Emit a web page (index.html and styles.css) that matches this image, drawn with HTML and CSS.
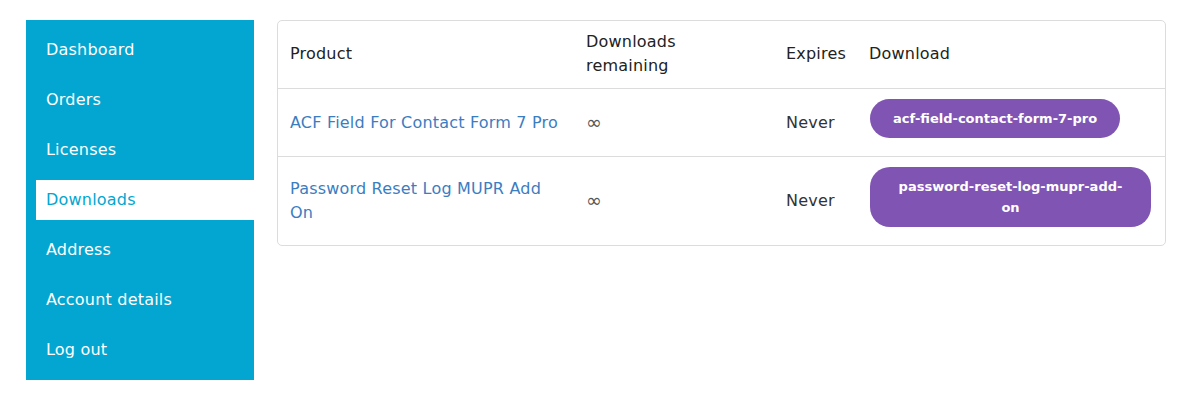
FILE: index.html
```html
<!DOCTYPE html>
<html lang="en">
<head>
<meta charset="utf-8">
<title>Downloads</title>
<link rel="stylesheet" href="styles.css">
</head>
<body>
<div class="account">
  <nav class="nav">
    <a class="nav-item" href="#">Dashboard</a>
    <a class="nav-item" href="#">Orders</a>
    <a class="nav-item" href="#">Licenses</a>
    <a class="nav-item active" href="#">Downloads</a>
    <a class="nav-item" href="#">Address</a>
    <a class="nav-item" href="#">Account details</a>
    <a class="nav-item" href="#">Log out</a>
  </nav>
  <div class="content">
    <table class="downloads">
      <thead>
        <tr>
          <th class="c-product">Product</th>
          <th class="c-remaining">Downloads remaining</th>
          <th class="c-expires">Expires</th>
          <th class="c-file">Download</th>
        </tr>
      </thead>
      <tbody>
        <tr>
          <td><a class="link" href="#">ACF Field For Contact Form 7 Pro</a></td>
          <td><span class="inf">∞</span></td>
          <td>Never</td>
          <td class="file"><a class="btn" href="#">acf-field-contact-form-7-pro</a></td>
        </tr>
        <tr>
          <td><a class="link" href="#">Password Reset Log MUPR Add On</a></td>
          <td><span class="inf">∞</span></td>
          <td>Never</td>
          <td class="file"><a class="btn" href="#">password-reset-log-mupr-add-on</a></td>
        </tr>
      </tbody>
    </table>
  </div>
</div>
</body>
</html>
```

FILE: styles.css
```css
html, body {
  margin: 0;
  padding: 0;
  background: #fff;
}
body {
  font-family: "DejaVu Sans", "Noto Sans", sans-serif;
  font-size: 16px;
  letter-spacing: 0.2px;
  color: #333;
}
.account {
  width: 1140px;
  padding: 20px 0 0 26px;
  display: flex;
  justify-content: space-between;
  align-items: flex-start;
}
.nav {
  width: 228px;
  box-sizing: border-box;
  background: #03a6d0;
  padding: 10px 0 10px 10px;
  display: flex;
  flex-direction: column;
  gap: 10px;
}
.nav-item {
  display: block;
  height: 40px;
  line-height: 40px;
  padding-left: 10px;
  color: #fff;
  text-decoration: none;
  font-size: 16px;
}
.nav-item.active {
  background: #fff;
  color: #03a6d0;
}
.content {
  width: 889px;
}
.downloads {
  width: 100%;
  table-layout: fixed;
  border-collapse: separate;
  border-spacing: 0;
  border: 1px solid #dcdcdc;
  border-radius: 5px;
}
.downloads th {
  text-align: left;
  font-weight: normal;
  color: #222;
  padding: 9px 12px 10px;
  line-height: 24px;
  vertical-align: middle;
}
.downloads td {
  padding: 14px 12px;
  line-height: 24px;
  border-top: 1px solid #dcdcdc;
  vertical-align: middle;
  color: #333;
}
.downloads td.file {
  padding: 10px 12px 18px 13px;
}
.c-product { width: 272px; }
.c-remaining { width: 176px; }
.c-expires { width: 59px; }
.link {
  color: #3b7dc1;
  text-decoration: none;
}
.inf {
  color: #555;
  font-size: 19px;
  line-height: 24px;
}
.btn {
  display: block;
  width: fit-content;
  background: #7f54b3;
  color: #fff;
  font-weight: bold;
  font-size: 13px;
  letter-spacing: 0;
  line-height: 21px;
  text-align: center;
  text-decoration: none;
  padding: 9px 23px;
  border-radius: 20px;
  margin-right: 2px;
}
```
